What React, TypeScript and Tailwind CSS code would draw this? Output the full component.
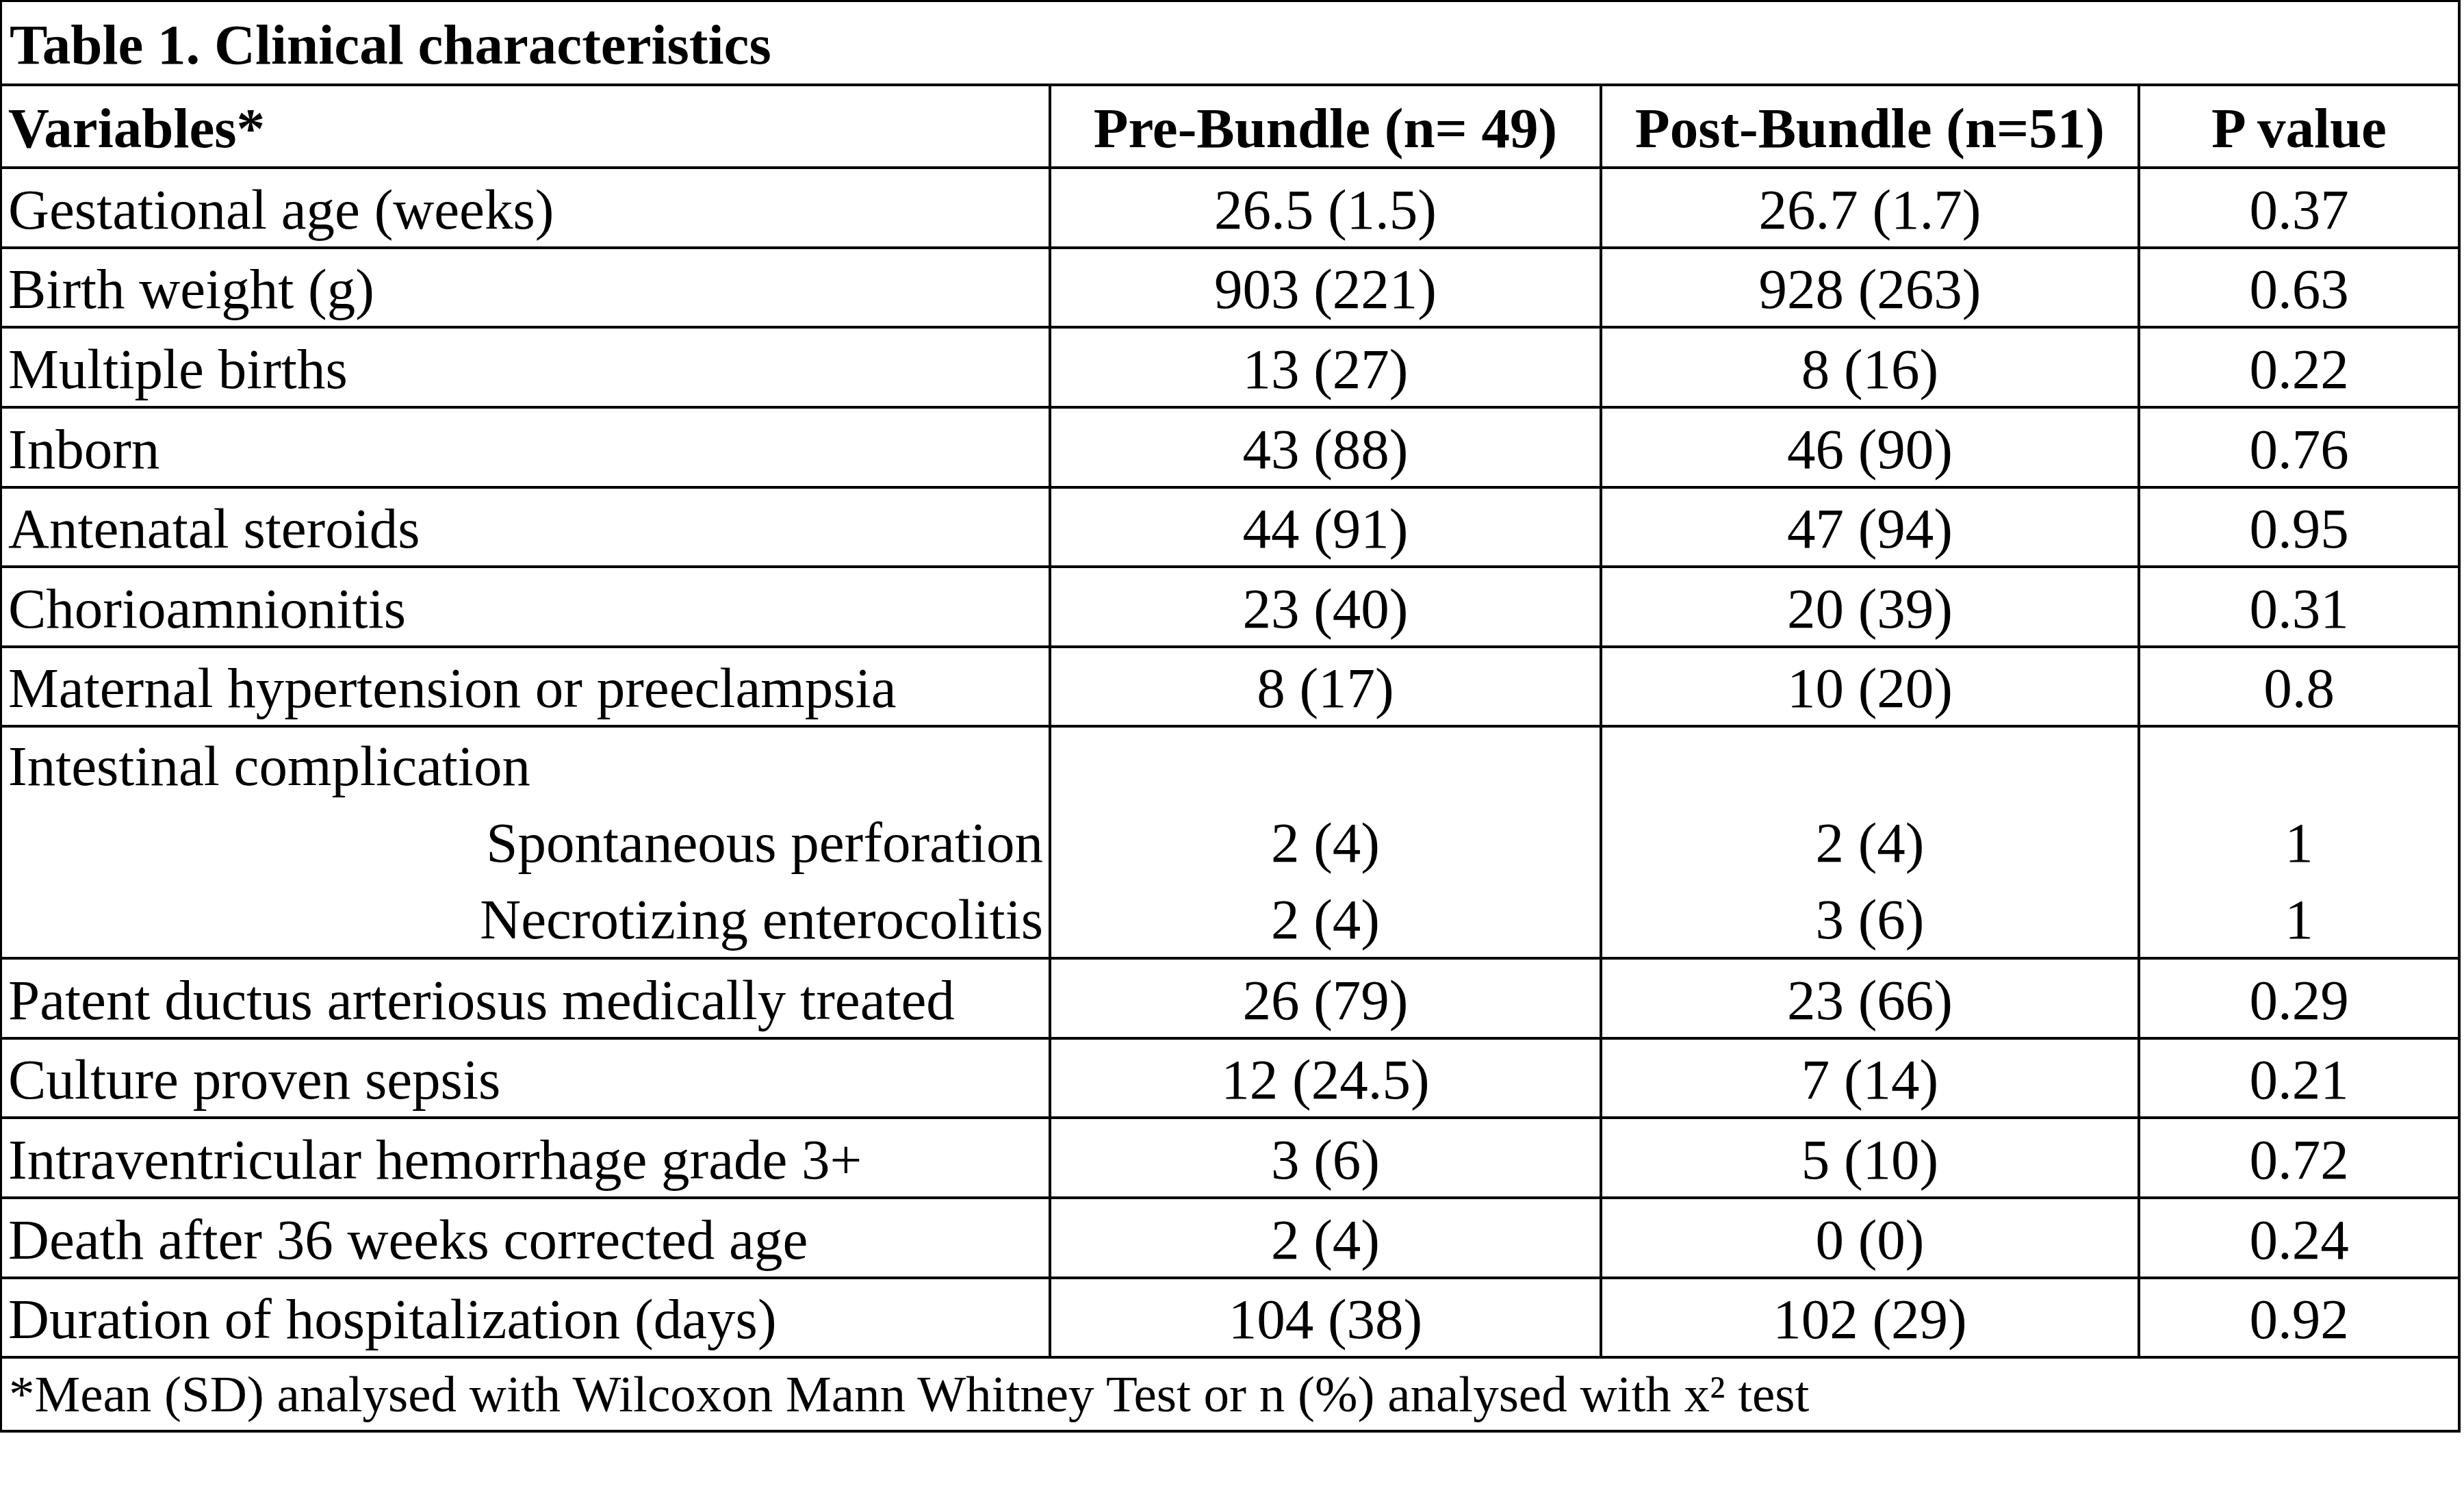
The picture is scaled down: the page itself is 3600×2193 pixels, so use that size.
import React from "react";

const rowsA: [string, string, string, string][] = [
  ["Gestational age (weeks)", "26.5 (1.5)", "26.7 (1.7)", "0.37"],
  ["Birth weight (g)", "903 (221)", "928 (263)", "0.63"],
  ["Multiple births", "13 (27)", "8 (16)", "0.22"],
  ["Inborn", "43 (88)", "46 (90)", "0.76"],
  ["Antenatal steroids", "44 (91)", "47 (94)", "0.95"],
  ["Chorioamnionitis", "23 (40)", "20 (39)", "0.31"],
  ["Maternal hypertension or preeclampsia", "8 (17)", "10 (20)", "0.8"],
];

const rowsB: [string, string, string, string][] = [
  ["Patent ductus arteriosus medically treated", "26 (79)", "23 (66)", "0.29"],
  ["Culture proven sepsis", "12 (24.5)", "7 (14)", "0.21"],
  ["Intraventricular hemorrhage grade 3+", "3 (6)", "5 (10)", "0.72"],
  ["Death after 36 weeks corrected age", "2 (4)", "0 (0)", "0.24"],
  ["Duration of hospitalization (days)", "104 (38)", "102 (29)", "0.92"],
];

function DataRow({ r }: { r: [string, string, string, string] }) {
  return (
    <>
      <div className="bg-white flex items-center pl-[9px] pt-[5px] whitespace-nowrap">{r[0]}</div>
      <div className="bg-white flex items-center justify-center pt-[5px] whitespace-nowrap">{r[1]}</div>
      <div className="bg-white flex items-center justify-center pt-[5px] whitespace-nowrap">{r[2]}</div>
      <div className="bg-white flex items-center justify-center pt-[5px] whitespace-nowrap">{r[3]}</div>
    </>
  );
}

export default function App() {
  return (
    <div className="min-h-screen bg-white text-black" style={{ fontFamily: '"Liberation Serif", "Times New Roman", serif' }}>
      <div className="w-fit bg-black pt-[3px] pl-[3px] pr-[4px] pb-[4px] grid gap-[4px] grid-cols-[1529px_801px_782px_464px] grid-rows-[119px_117px_113px_112px_113px_113px_112px_113px_112px_335px_113px_112px_113px_113px_112px_104px] text-[83px]">
        <div className="col-span-4 bg-white flex items-center pl-[11px] pt-[5px] font-bold whitespace-nowrap">
          Table 1. Clinical characteristics
        </div>
        <div className="bg-white flex items-center pl-[9px] pt-[5px] font-bold whitespace-nowrap">Variables*</div>
        <div className="bg-white flex items-center justify-center pt-[5px] font-bold whitespace-nowrap">Pre-Bundle (n= 49)</div>
        <div className="bg-white flex items-center justify-center pt-[5px] font-bold whitespace-nowrap">Post-Bundle (n=51)</div>
        <div className="bg-white flex items-center justify-center pt-[5px] font-bold whitespace-nowrap">P value</div>

        {rowsA.map((r) => (
          <DataRow key={r[0]} r={r} />
        ))}

        <div className="bg-white flex flex-col leading-[112px] whitespace-nowrap">
          <div className="pl-[9px]">Intestinal complication</div>
          <div className="text-right pr-[8px]">Spontaneous perforation</div>
          <div className="text-right pr-[8px]">Necrotizing enterocolitis</div>
        </div>
        <div className="bg-white flex flex-col leading-[112px] text-center whitespace-nowrap">
          <div>&nbsp;</div>
          <div>2 (4)</div>
          <div>2 (4)</div>
        </div>
        <div className="bg-white flex flex-col leading-[112px] text-center whitespace-nowrap">
          <div>&nbsp;</div>
          <div>2 (4)</div>
          <div>3 (6)</div>
        </div>
        <div className="bg-white flex flex-col leading-[112px] text-center whitespace-nowrap">
          <div>&nbsp;</div>
          <div>1</div>
          <div>1</div>
        </div>

        {rowsB.map((r) => (
          <DataRow key={r[0]} r={r} />
        ))}

        <div className="col-span-4 bg-white flex items-center pl-[10px] text-[75px] whitespace-nowrap">
          *Mean (SD) analysed with Wilcoxon Mann Whitney Test or n (%) analysed with x² test
        </div>
      </div>
    </div>
  );
}
